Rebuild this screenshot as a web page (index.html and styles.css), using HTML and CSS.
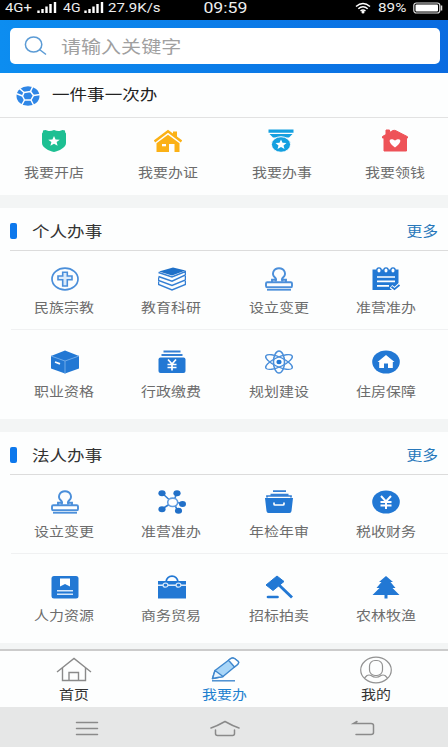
FILE: index.html
```html
<!DOCTYPE html>
<html lang="zh-CN">
<head>
<meta charset="utf-8">
<title>我要办</title>
<link rel="stylesheet" href="styles.css">
</head>
<body>
<svg class="defs" width="0" height="0">
  <symbol id="stamp" viewBox="-14 -12 28 24">
    <path d="M-3.500 2.500C-2.500 1-3-.5-4-1.500C-8-5-5.500-10.800 0-10.800S8-5 4-1.500C3-.5 2.500 1 3.500 2.500M-7 3V.8h3.500M7 3V.8H3.500" fill="none" stroke="currentColor" stroke-width="1.900"/>
    <rect x="-13" y="3.200" width="26" height="5" rx="1.300" fill="none" stroke="currentColor" stroke-width="1.900"/>
    <path d="M-12 10.800h24" stroke="currentColor" stroke-width="1.700"/>
  </symbol>
</svg>
<div class="screen">
  <div class="status">
    <div class="status-left">
      <span class="st net1">4G+</span>
      <svg class="sig" width="20" height="12" viewBox="0 0 20 12"><path d="M1.500 12V9.500M5.500 12V8M9.500 12V5.500M13.500 12V3M18 12V1" stroke="#fff" stroke-width="2.400"/></svg>
      <span class="st net2">4G</span>
      <svg class="sig sig2" width="20" height="12" viewBox="0 0 20 12"><path d="M1.500 12V9.500M5.500 12V8M9.500 12V5.500M13.500 12V3M18 12V1" stroke="#fff" stroke-width="2.400"/></svg>
      <span class="st speed">27.9K/s</span>
    </div>
    <span class="clock">09:59</span>
    <div class="status-right">
      <svg width="16" height="12" viewBox="0 0 16 12" fill="none" stroke="#fff" stroke-width="1.500"><path d="M1 4.500Q8-1.500 15 4.500M3.300 6.800Q8 2.800 12.700 6.800M5.500 9Q8 7 10.500 9"/><circle cx="8" cy="10" r=".8" fill="#fff"/></svg>
      <span class="pct">89%</span>
      <svg width="30" height="12" viewBox="0 0 30 12"><rect x=".8" y="1" width="26" height="10" rx="2.500" fill="none" stroke="#ddd" stroke-width="1.200"/><rect x="2.500" y="2.600" width="22.500" height="6.800" rx="1" fill="#fff"/><path d="M28.500 3.500v5" stroke="#ddd" stroke-width="1.500"/></svg>
    </div>
  </div>

  <header class="header">
    <div class="search">
      <svg width="24" height="20" viewBox="0 0 24 20" fill="none" stroke="#5b9bd5" stroke-width="1.500"><ellipse cx="9.600" cy="8.500" rx="8.200" ry="7.600"/><path d="M15.500 13.500l6.500 5"/></svg>
      <span class="placeholder">请输入关键字</span>
    </div>
  </header>

  <section class="once">
    <svg width="24" height="20" viewBox="-12 -10 24 20"><ellipse rx="11.500" ry="9.800" fill="#2f86e6"/><path d="M-4-3.500L2.500-4.500 5.500-.5 3 4-3.500 4-5.500 0Z" fill="#2f86e6" stroke="#fff" stroke-width="1.500" stroke-linejoin="round"/><path d="M-12-2.500L-5.500 0M-6.500 9.500L-3.500 4M5.500 9L3 4M12-1.500L5.500-.5M5-10L2.500-4.500M-8.500-7.500L-4-3.500" stroke="#fff" stroke-width="1.500" fill="none"/></svg>
    <span class="title">一件事一次办</span>
  </section>

  <section class="quick">
    <div class="item">
      <svg width="28" height="24" viewBox="-14 -12 28 24"><path d="M-11-10.500L-8.500-11-5.500-10Q-3-9.700 0-11 3-9.700 5.500-10L8.500-11 11-10.500Q10.800-8.500 12-7.500V2C12 6.500 5 10 0 11-5 10-12 6.500-12 2V-7.500Q-10.800-8.500-11-10.500Z" fill="#1dbf92"/><path d="M0-5L1.600-1.600 5.800-1.300 2.600 1.100 3.600 4.800 0 2.700-3.600 4.800-2.600 1.100-5.800-1.300-1.600-1.600Z" fill="#fff"/></svg>
      <span class="label">我要开店</span>
    </div>
    <div class="item">
      <svg width="28" height="24" viewBox="-14 -12 28 24"><path d="M-13.500 .5L0-9.700 13.500 .5" fill="none" stroke="#fbb116" stroke-width="2.400"/><path d="M5-9.500h4v6.500l-4-3z" fill="#fbb116"/><path d="M0-6.300L11.500 2.300V11H6.500V3H1V11H-11.500V2.300Z" fill="#fbb116"/><path d="M-6 3h4v2.300h-4z" fill="#fff"/></svg>
      <span class="label">我要办证</span>
    </div>
    <div class="item">
      <svg width="28" height="24" viewBox="-14 -12 28 24"><path d="M-12.500-11.500h25v3.200h-25zM-11.500-7h23L8-3.500H-8z" fill="#14a0e0"/><ellipse cy="3.500" rx="9.600" ry="7.800" fill="#14a0e0" stroke="#fff" stroke-width="1"/><path d="M0-1.500L1.500 1.800 5.500 2 2.500 4.500 3.500 8 0 6-3.500 8-2.500 4.500-5.500 2-1.500 1.800Z" fill="#fff"/></svg>
      <span class="label">我要办事</span>
    </div>
    <div class="item">
      <svg width="28" height="24" viewBox="-14 -12 28 24"><path d="M-9-11h3.500v2.500L-2-10.500Q-.5-11 1-10.200L12.500-4.300V-3H11.500V10H-11V-3H-12.500V-4.500L-9-6.500Z" fill="#ee5358" stroke="#ee5358" stroke-linejoin="round"/><path d="M0 6.500C-9 0-5-4 0-.5 5-4 9 0 0 6.500Z" fill="#fff"/></svg>
      <span class="label">我要领钱</span>
    </div>
  </section>

  <section class="panel">
    <div class="panel-head"><i class="bar"></i><span class="title">个人办事</span><span class="more">更多</span></div>
    <div class="row first">
      <div class="item">
        <svg width="28" height="24" viewBox="-14 -12 28 24" fill="none" stroke="#4b8fda"><ellipse rx="13" ry="10.800" stroke-width="1.700"/><path d="M-2.300-6.800h4.600v3.800h4.700v3.700H2.300v6.300h-4.600V.7H-7V-3h4.700z" stroke-width="1.600" fill="#dcebfa"/></svg>
        <span class="label">民族宗教</span>
      </div>
      <div class="item">
        <svg width="28" height="24" viewBox="-14 -12 28 24"><path d="M-13-7.500L1-11.500 13.500-8.500 0-3.500Z" fill="#1f70c8"/><path d="M-13.500-6.500L0-2 13.500-7.500v3.500L0 2.300-13.500-2.500M-13.500-1.500V1.500L0 6.500 13.500 1V-3M-13.500 2.500V5.500L0 11 13.500 5.500V2" fill="none" stroke="#347fd4" stroke-width="1.500"/></svg>
        <span class="label">教育科研</span>
      </div>
      <div class="item">
        <svg width="28" height="24"><use href="#stamp"/></svg>
        <span class="label">设立变更</span>
      </div>
      <div class="item">
        <svg width="28" height="24" viewBox="-14 -12 28 24"><path d="M-13.500-9.500h26V5L7 11H-13.500Z" fill="#2278d4"/><path d="M-9-2h18M-9 2.300h18M-9 6.800H3" stroke="#fff" stroke-width="1.700"/><g fill="#fff" stroke="#2278d4" stroke-width="1.300"><ellipse cx="-7" cy="-8.500" rx="2.200" ry="2.600"/><ellipse cx="0" cy="-8.500" rx="2.200" ry="2.600"/><ellipse cx="7" cy="-8.500" rx="2.200" ry="2.600"/></g><path d="M5 7.500l3.500 3L14 5.500" fill="none" stroke="#fff" stroke-width="4"/><path d="M5.500 7.800l3 2.400L13.500 6" fill="none" stroke="#2278d4" stroke-width="1.800"/></svg>
        <span class="label">准营准办</span>
      </div>
    </div>
    <div class="row second">
      <div class="item">
        <svg width="28" height="24" viewBox="-14 -12 28 24"><path d="M0-11.500L14-6V6.500L0 11.500-14 6.500V-6Z" fill="#2278d4"/><path d="M-14-6L0-1 14-6M0-1V11.500" fill="none" stroke="#6faae8" stroke-width="1"/><path d="M-10 0l5 1.800" stroke="#fff" stroke-width="1.800"/></svg>
        <span class="label">职业资格</span>
      </div>
      <div class="item">
        <svg width="28" height="24" viewBox="-14 -12 28 24"><path d="M-8.500-10.500h17M-10.500-7h21" stroke="#347fd4" stroke-width="1.900"/><rect x="-13.500" y="-4.500" width="27" height="15.500" rx="2" fill="#2278d4"/><path d="M-4-2.500L0 2 4-2.500M0 2V8.500M-4.500 2.500h9M-4.500 5.500h9" stroke="#fff" stroke-width="1.700" fill="none"/></svg>
        <span class="label">行政缴费</span>
      </div>
      <div class="item">
        <svg width="28" height="24" viewBox="-14 -12 28 24"><g fill="none" stroke="#4b8fda" stroke-width="1.300" transform="scale(1.200 1)"><ellipse rx="4.600" ry="11"/><ellipse rx="4.600" ry="12.500" transform="rotate(60)"/><ellipse rx="4.600" ry="12.500" transform="rotate(-60)"/></g><ellipse rx="2.600" ry="2.200" fill="#2278d4"/></svg>
        <span class="label">规划建设</span>
      </div>
      <div class="item">
        <svg width="28" height="24" viewBox="-14 -12 28 24"><ellipse rx="13.800" ry="11.500" fill="#2278d4"/><path d="M0-7L8.500 0H6.800V6H2V1.500H-2V6H-6.800V0H-8.500Z" fill="#fff"/></svg>
        <span class="label">住房保障</span>
      </div>
    </div>
  </section>

  <section class="panel corporate">
    <div class="panel-head"><i class="bar"></i><span class="title">法人办事</span><span class="more">更多</span></div>
    <div class="row first">
      <div class="item">
        <svg width="28" height="24"><use href="#stamp"/></svg>
        <span class="label">设立变更</span>
      </div>
      <div class="item">
        <svg width="28" height="24" viewBox="-14 -12 28 24"><path d="M-10-9L-3-2.500M5-9L2.500-3M13 2L5 .5M6 9L3 3.500M-10 7L-3 2.500" stroke="#347fd4" stroke-width="1.600"/><ellipse cx=".7" cy=".3" rx="5" ry="4.200" fill="#fff" stroke="#5f9ce0" stroke-width="1.600"/><g fill="#2170c8"><ellipse cx="-10" cy="-8.800" rx="3.600" ry="3"/><ellipse cx="5" cy="-8.800" rx="3.600" ry="3"/><ellipse cx="10.500" cy="2" rx="3.500" ry="2.900"/><ellipse cx="6.500" cy="8.800" rx="3.600" ry="3"/><ellipse cx="-10" cy="7.200" rx="3.600" ry="3"/></g></svg>
        <span class="label">准营准办</span>
      </div>
      <div class="item">
        <svg width="28" height="24" viewBox="-14 -12 28 24"><path d="M-6-10.800H7M-8.500-7.500h18M-12 -4.500v-1.500h24v1.500" stroke="#347fd4" stroke-width="1.700" fill="none"/><path d="M-14-4H14L12.500 9Q12.300 11 10.500 11H-10.500Q-12.300 11-12.500 9Z" fill="#2278d4"/><path d="M-5 .5V2Q-5 3-4 3H4Q5 3 5 2V.5" fill="none" stroke="#fff" stroke-width="1.700"/></svg>
        <span class="label">年检年审</span>
      </div>
      <div class="item">
        <svg width="28" height="24" viewBox="-14 -12 28 24"><ellipse rx="13.800" ry="11.500" fill="#2278d4"/><path d="M-5-6L0-.5 5-6M0-.5V7M-5.500 0h11M-5.500 3.500h11" stroke="#fff" stroke-width="2" fill="none"/></svg>
        <span class="label">税收财务</span>
      </div>
    </div>
    <div class="row second">
      <div class="item">
        <svg width="28" height="24" viewBox="-14 -12 28 24"><rect x="-13.500" y="-11" width="27" height="22.500" rx="2.500" fill="#2278d4"/><path d="M-5-8.500H5V-.5L0-3-5-.5Z" fill="#fff"/><path d="M-8 3.800H8M-8 7.300H8" stroke="#d5e7fa" stroke-width="1.500"/></svg>
        <span class="label">人力资源</span>
      </div>
      <div class="item">
        <svg width="28" height="24" viewBox="-14 -12 28 24"><path d="M-6-5Q-5-10.800 0-10.800T6-5" fill="none" stroke="#2278d4" stroke-width="1.700"/><path d="M-14-6H14V11.500H-14Z" fill="#2278d4"/><path d="M-14-1.800H14" stroke="#fff" stroke-width="1.300"/><g fill="#2278d4" stroke="#d5e7fa" stroke-width="1.200"><ellipse cx="-6.500" cy="-1.800" rx="2.400" ry="2"/><ellipse cx="6.500" cy="-1.800" rx="2.400" ry="2"/></g></svg>
        <span class="label">商务贸易</span>
      </div>
      <div class="item">
        <svg width="28" height="24" viewBox="-14 -12 28 24"><path d="M-2-11L5-5.500-6 3.500-13-2Z" fill="#2278d4" stroke="#2278d4" stroke-linejoin="round"/><path d="M0-2L13 10.500" stroke="#2278d4" stroke-width="2.900"/><path d="M-11 10h9.500" stroke="#2278d4" stroke-width="2.700" stroke-linecap="round"/></svg>
        <span class="label">招标拍卖</span>
      </div>
      <div class="item">
        <svg width="28" height="24" viewBox="-14 -12 28 24"><path d="M0-11L7-5H4.500L9.500 1H6.500L13.500 8H1.500V11.500H-1.500V8H-13.500L-6.500 1H-9.500L-4.500-5H-7Z" fill="#2278d4"/></svg>
        <span class="label">农林牧渔</span>
      </div>
    </div>
  </section>

  <nav class="tabs">
    <div class="tab">
      <svg width="36" height="28" viewBox="-18 -14 36 28" fill="none" stroke="#8a8a8a" stroke-width="1.400"><path d="M-17 2L0-11.500 17 2M-11.500-2V10.500H11.500V-2M-5 10.500V2.500H4.500V10.500"/></svg>
      <span class="label">首页</span>
    </div>
    <div class="tab active">
      <svg width="36" height="28" viewBox="-18 -14 36 28" fill="none" stroke="#3f87cd" stroke-width="1.400" stroke-linejoin="round"><path d="M-12.500 8.500L-10 .5 4.500-10.500Q7-13 9.500-11.500L13-8.800Q14.500-7.500 12.500-5.500L-2 6.500Z" fill="#a9d6f8"/><path d="M3.500-9.700L9.500-3 12.500-5.500Q14.500-7.500 13-8.800L9.500-11.500Q7-13 4.500-10.500Z" fill="#fff"/><path d="M-10 .5L-2 6.500-12.500 8.500Z" fill="#e9f5fe"/><path d="M-13 10.800H10"/></svg>
      <span class="label">我要办</span>
    </div>
    <div class="tab">
      <svg width="36" height="28" viewBox="-18 -14 36 28" fill="none" stroke="#929292" stroke-width="1.200"><ellipse rx="15.300" ry="12.800"/><rect x="-6.500" y="-9.500" width="13" height="15" rx="5.500"/><path d="M-11.500 8L-9 5.500Q-7 4.500-5 5.500Q0 9 5 5.500Q7 4.500 9 5.500L11.500 8"/></svg>
      <span class="label">我的</span>
    </div>
  </nav>
  <div class="softkeys">
    <svg width="32" height="20" viewBox="-16 -10 32 20"><path d="M-10.500-6.500h21M-10.500-.5h21M-10.500 5.500h21"/></svg>
    <svg width="32" height="20" viewBox="-16 -10 32 20"><path d="M-14-1Q-8-3 0-7.500 8-3 14-1M-9.500 1V4.500Q-9.500 6.500-7.500 6.500H7.500Q9.500 6.500 9.500 4.500V1"/></svg>
    <svg width="32" height="20" viewBox="-16 -10 32 20"><path d="M-6-7.500L-9.500-5.500H8Q10.500-5.500 10.500-3.500V3.500Q10.500 5.500 8 5.500H-7"/></svg>
  </div>
</div>
</body>
</html>
```
FILE: styles.css
```css
* { box-sizing: border-box; }
body {
  margin: 0;
  background: #f3f5f5;
  font-family: "Noto Sans CJK SC", sans-serif;
  color: #333;
}
svg { display: block; flex: none; }
.defs { display: none; }
.screen {
  width: 448px;
  height: 747px;
  overflow: hidden;
  display: flex;
  flex-direction: column;
}
.screen > * { flex: none; }

.status {
  height: 20px;
  background: #000;
  color: #eee;
  font: 12px/16px Roboto, sans-serif;
  display: grid;
  grid-template-columns: 190px 68px 190px;
  grid-template-rows: 16px;
  align-items: center;
}
.status-left, .status-right { display: flex; align-items: center; }
.status-left { padding-left: 5px; }
.status span { transform-origin: left center; white-space: nowrap; }
.sig { margin-top: -2px; }
.net1 { width: 32px; transform: scaleX(1.24); }
.net2 { width: 21px; margin-left: 6px; transform: scaleX(1.170); }
.sig2 { margin-right: 4px; }
.speed { transform: scaleX(1.25); }
.clock { font-size: 14.500px; padding: 1px 0 0 11px; transform: scaleX(1.220); }
.status-right { padding-left: 97px; margin-right: -10px; }
.pct { width: 35px; margin-left: 7px; transform: scaleX(1.270); }

.header {
  height: 53px;
  padding: 8px 8px 9px 10px;
  background: linear-gradient(90deg, #0c8df0, #0a6be0);
}
.search {
  height: 36px;
  border-radius: 5px;
  background: #fff;
  display: flex;
  align-items: center;
  padding-left: 14px;
}
.placeholder {
  margin: -2px 0 0 13px;
  font-size: 17.5px;
  color: #a0a0a0;
  transform: scaleX(1.145);
  transform-origin: left center;
}

.once {
  height: 45px;
  background: #fdfefe;
  border-bottom: 1px solid #e2e2e2;
  display: flex;
  align-items: center;
  padding-left: 16px;
}
.once svg { margin-top: 2px; }
.title {
  font-size: 15px;
  line-height: 22px;
  transform: scaleX(1.170);
  transform-origin: left center;
}
.once .title { margin: -3px 0 0 12px; color: #222; }

.quick {
  height: 77px;
  background: #fdfefe;
  display: grid;
  grid-template-columns: repeat(4, 113.700px);
  margin-left: -3px;
  padding-top: 11px;
}
.item, .tab { display: flex; flex-direction: column; align-items: center; }
.label {
  font-size: 13px;
  line-height: 20px;
  color: #6c6c6c;
  transform: scaleX(1.150);
  white-space: nowrap;
}
.quick .label { margin: 9px 0 0 1px; }

.panel {
  height: 211px;
  margin-top: 13px;
  background: #fdfefe;
}
.panel-head {
  height: 43px;
  margin-left: 10px;
  border-bottom: 1px solid #dcdcdc;
  display: flex;
  align-items: center;
  padding: 4px 10px 0 0;
}
.bar { width: 7px; height: 16px; border-radius: 2px; background: #0d78ec; }
.panel .title { margin: -1px 0 0 15px; }
.more {
  margin: -3px 0 0 auto;
  font-size: 13.500px;
  line-height: 20px;
  color: #2878bb;
  transform: scaleX(1.170);
  transform-origin: right center;
}
.row {
  display: grid;
  grid-template-columns: repeat(4, 107.250px);
  margin-left: 11px;
  color: #4b8fda;
}
.first { height: 79px; padding-top: 16px; border-bottom: 1px solid #f0f1f2; }
.second { padding-top: 20px; }
.row .label { margin: 6px 1px 0 0; }
.second .label { margin-top: 7px; }
.corporate .first { padding-top: 15px; }
.corporate .first .label { margin-top: 7px; }
.corporate .second { padding-top: 21px; }
.corporate .second .label { margin-top: 6px; }

.tabs {
  height: 58px;
  margin-top: 6px;
  background: #fdfefe;
  border-top: 2px solid #ccc;
  display: grid;
  grid-template-columns: repeat(3, 151px);
  margin-left: -2px;
  padding-top: 5px;
}
.tabs .label { color: #333; margin: 0 0 0 1px; }
.tabs .active .label { color: #1d80cf; }

.softkeys {
  height: 40px;
  background: #e6e7e7;
  display: flex;
  justify-content: space-between;
  padding: 12px 69px 0 71px;
}
.softkeys path { fill: none; stroke: #8a8a8a; stroke-width: 1.500; stroke-linecap: round; }
```
